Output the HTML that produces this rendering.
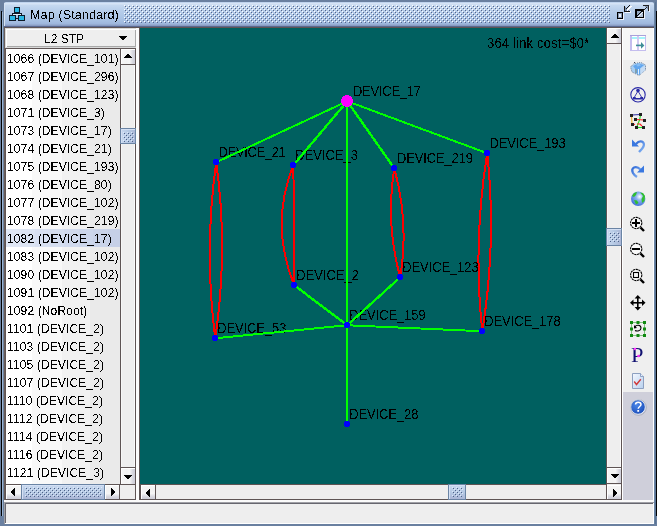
<!DOCTYPE html>
<html><head><meta charset="utf-8">
<style>
*{margin:0;padding:0;box-sizing:border-box}
html,body{width:657px;height:526px;overflow:hidden}
body{position:relative;background:#6a80a0;font-family:"Liberation Sans",sans-serif;color:#000}
.a{position:absolute}
.t{position:absolute;white-space:nowrap;font-size:12px;line-height:14px;filter:url(#crisp)}
</style></head><body>
<svg width="0" height="0" style="position:absolute"><filter id="crisp" x="-10%" y="-10%" width="120%" height="120%"><feComponentTransfer><feFuncA type="discrete" tableValues="0 1"/></feComponentTransfer></filter><filter id="crisp2" x="-10%" y="-10%" width="120%" height="120%"><feComponentTransfer><feFuncA type="discrete" tableValues="0 1 1"/></feComponentTransfer></filter></svg>
<div class="a" style="left:1px;top:11px;width:1px;height:505px;background:#000;"></div>
<div class="a" style="left:2px;top:12px;width:1px;height:504px;background:#9ab4d4;"></div>
<div class="a" style="left:3px;top:12px;width:1px;height:504px;background:#6a7f9a;"></div>
<div class="a" style="left:656px;top:11px;width:1px;height:505px;background:#000;"></div>
<div class="a" style="left:654px;top:2px;width:1px;height:522px;background:#6a84a4;"></div>
<div class="a" style="left:655px;top:2px;width:1px;height:522px;background:#5a7494;"></div>
<div class="a" style="left:4px;top:2px;width:650px;height:25px;border-radius:2px 2px 0 0;background:linear-gradient(#c0d4ee 0px,#c0d4ee 1px,#d6e4f6 1px,#d6e4f6 2px,#c6d9f0 3px,#b9cfeb 8px,#aec7e7 14px,#a6bfe2 19px,#9eb6dc 22px,#8ea2c8 23px,#8496be 24px,#5a6890 24px,#5a6890 25px)"></div>
<div class="a" style="left:4px;top:3px;width:1px;height:23px;background:#d6e2f2"></div>
<svg class="a" style="left:0;top:0" width="657" height="27" shape-rendering="crispEdges">
<defs><pattern id="bp" x="124" y="5" width="4" height="4" patternUnits="userSpaceOnUse">
<rect x="0" y="0" width="1" height="1" fill="#ffffff"/><rect x="1" y="1" width="1" height="1" fill="#56668a"/>
<rect x="2" y="2" width="1" height="1" fill="#ffffff"/><rect x="3" y="3" width="1" height="1" fill="#56668a"/>
</pattern></defs>
<rect x="124" y="5" width="486" height="18" fill="url(#bp)"/>
<g fill="#0e1a28">
<rect x="14" y="7" width="6" height="6"/><rect x="9" y="15" width="7" height="6"/><rect x="18" y="15" width="7" height="6"/>
<rect x="12" y="13" width="10" height="1"/><rect x="12" y="13" width="1" height="2"/><rect x="21" y="13" width="1" height="2"/><rect x="16" y="18" width="2" height="1"/>
</g><g fill="#2ab8e4"><rect x="15" y="8" width="4" height="4"/><rect x="10" y="16" width="5" height="4"/><rect x="19" y="16" width="5" height="4"/></g>
<rect x="13" y="14" width="8" height="1" fill="#e8eef8"/>
<rect x="617" y="12" width="6" height="7" fill="#000"/>
<rect x="618" y="13" width="4" height="5" fill="#8597b2"/>
<rect x="619" y="14" width="2" height="3" fill="#e8eef8"/>
<rect x="623" y="13" width="1" height="7" fill="#f0f4fc"/><rect x="618" y="19" width="6" height="1" fill="#f0f4fc"/>
<path d="M625 7 L629 11 L625 11 Z" fill="#7f92ae"/>
<rect x="624" y="6" width="1" height="6" fill="#111"/><rect x="624" y="11" width="6" height="1" fill="#111"/>
<rect x="625" y="12" width="6" height="1" fill="#f0f4fc"/><rect x="630" y="11" width="1" height="1" fill="#f0f4fc"/>
<path d="M625.5 9.5 L630 5" stroke="#111" stroke-width="1"/>
<path d="M627 10.5 L631.5 6" stroke="#ffffff" stroke-width="1"/>
<rect x="635" y="9" width="9" height="9" fill="#000"/>
<rect x="637" y="11" width="6" height="6" fill="#92a6c0"/>
<rect x="640" y="14" width="3" height="3" fill="#b6c6da"/>
<path d="M636.8 16.2 L642.5 10.5" stroke="#000" stroke-width="1"/>
<path d="M638.2 16.8 L642.8 12.2" stroke="#f4f8ff" stroke-width="1"/>
<rect x="644" y="10" width="1" height="9" fill="#f0f4fc"/><rect x="636" y="18" width="9" height="1" fill="#f0f4fc"/>
<path d="M644 6 L648 6 L648 10 Z" fill="#8194b0"/>
<rect x="643" y="5" width="6" height="1" fill="#222"/><rect x="648" y="5" width="1" height="6" fill="#222"/>
<rect x="649" y="6" width="1" height="6" fill="#f0f4fc"/>
<path d="M642 12 L647 7" stroke="#222" stroke-width="1"/>
</svg>
<div class="t" style="left:30px;top:7px;font-size:12.6px;line-height:16px;letter-spacing:0.1px">Map (Standard)</div>
<div class="a" style="left:4px;top:27px;width:650px;height:1px;background:#5e5454;"></div>
<div class="a" style="left:4px;top:28px;width:650px;height:472px;background:#eeeeee;"></div>
<div class="a" style="left:4px;top:27px;width:1px;height:473px;background:#6a5e5a;"></div>
<div class="a" style="left:5px;top:28px;width:131px;height:20px;background:#d8d8d8;"></div>
<div class="a" style="left:6px;top:29px;width:130px;height:18px;background:#ffffff;"></div>
<div class="a" style="left:7px;top:30px;width:128px;height:16px;background:#eeeeee;"></div>
<div class="a" style="left:7px;top:46px;width:129px;height:1px;background:#a8a8a8;"></div>
<div class="a" style="left:135px;top:30px;width:1px;height:17px;background:#a8a8a8;"></div>
<div class="t" style="left:44px;top:32px">L2 STP</div>
<div class="a" style="left:5px;top:48px;width:131px;height:1px;background:#5e5454;"></div>
<div class="a" style="left:5px;top:48px;width:1px;height:452px;background:#5e5454;"></div>
<div class="a" style="left:6px;top:49px;width:114px;height:435px;background:linear-gradient(90deg,#fff 0,#fff 26px,#f8f8f8 26px,#f8f8f8 56px,#f1f1f1 56px,#f1f1f1 84px,#eaeaea 84px)"></div>
<div class="a" style="left:6px;top:229px;width:114px;height:18px;background:linear-gradient(90deg,#e0e7f5 0.0px,#e0e7f5 14.5px,#dce4f3 14.5px,#dce4f3 29.0px,#d8e0f1 29.0px,#d8e0f1 43.5px,#d4ddef 43.5px,#d4ddef 58.0px,#d0d9ed 58.0px,#d0d9ed 72.5px,#ccd6eb 72.5px,#ccd6eb 87.0px,#c9d3e9 87.0px,#c9d3e9 101.5px,#c6d0e7 101.5px,#c6d0e7 116.0px)"></div>
<div class="t" style="left:7px;top:52px;letter-spacing:0.13px">1066 (DEVICE_101)</div>
<div class="t" style="left:7px;top:70px;letter-spacing:0.13px">1067 (DEVICE_296)</div>
<div class="t" style="left:7px;top:88px;letter-spacing:0.13px">1068 (DEVICE_123)</div>
<div class="t" style="left:7px;top:106px;letter-spacing:0.13px">1071 (DEVICE_3)</div>
<div class="t" style="left:7px;top:124px;letter-spacing:0.13px">1073 (DEVICE_17)</div>
<div class="t" style="left:7px;top:142px;letter-spacing:0.13px">1074 (DEVICE_21)</div>
<div class="t" style="left:7px;top:160px;letter-spacing:0.13px">1075 (DEVICE_193)</div>
<div class="t" style="left:7px;top:178px;letter-spacing:0.13px">1076 (DEVICE_80)</div>
<div class="t" style="left:7px;top:196px;letter-spacing:0.13px">1077 (DEVICE_102)</div>
<div class="t" style="left:7px;top:214px;letter-spacing:0.13px">1078 (DEVICE_219)</div>
<div class="t" style="left:7px;top:232px;letter-spacing:0.13px">1082 (DEVICE_17)</div>
<div class="t" style="left:7px;top:250px;letter-spacing:0.13px">1083 (DEVICE_102)</div>
<div class="t" style="left:7px;top:268px;letter-spacing:0.13px">1090 (DEVICE_102)</div>
<div class="t" style="left:7px;top:286px;letter-spacing:0.13px">1091 (DEVICE_102)</div>
<div class="t" style="left:7px;top:304px;letter-spacing:0.13px">1092 (NoRoot)</div>
<div class="t" style="left:7px;top:322px;letter-spacing:0.13px">1101 (DEVICE_2)</div>
<div class="t" style="left:7px;top:340px;letter-spacing:0.13px">1103 (DEVICE_2)</div>
<div class="t" style="left:7px;top:358px;letter-spacing:0.13px">1105 (DEVICE_2)</div>
<div class="t" style="left:7px;top:376px;letter-spacing:0.13px">1107 (DEVICE_2)</div>
<div class="t" style="left:7px;top:394px;letter-spacing:0.13px">1110 (DEVICE_2)</div>
<div class="t" style="left:7px;top:412px;letter-spacing:0.13px">1112 (DEVICE_2)</div>
<div class="t" style="left:7px;top:430px;letter-spacing:0.13px">1114 (DEVICE_2)</div>
<div class="t" style="left:7px;top:448px;letter-spacing:0.13px">1116 (DEVICE_2)</div>
<div class="t" style="left:7px;top:466px;letter-spacing:0.13px">1121 (DEVICE_3)</div>
<div class="a" style="left:120px;top:49px;width:1px;height:435px;background:#5e5454;"></div>
<div class="a" style="left:135px;top:48px;width:1px;height:452px;background:#5e5454;"></div>
<div class="a" style="left:121px;top:49px;width:14px;height:435px;background:#eeeeee;"></div>
<div class="a" style="left:121px;top:49px;width:1px;height:435px;background:#f6f6f6;"></div>
<div class="a" style="left:134px;top:49px;width:1px;height:435px;background:#fafafa;"></div>
<div class="a" style="left:121px;top:49px;width:14px;height:15px;background:linear-gradient(90deg,#f6f6f6 0,#f2f2f2 40%,#f6f6f6 60%,#d6d6de 85%,#cfcfd9 100%);"></div>
<div class="a" style="left:121px;top:49px;width:14px;height:1px;background:#ffffff;"></div>
<div class="a" style="left:121px;top:49px;width:1px;height:15px;background:#ffffff;"></div>
<div class="a" style="left:121px;top:64px;width:14px;height:1px;background:#5e5454;"></div>
<div class="a" style="left:121px;top:467px;width:14px;height:1px;background:#5e5454;"></div>
<div class="a" style="left:121px;top:468px;width:14px;height:16px;background:linear-gradient(90deg,#f6f6f6 0,#f2f2f2 40%,#f6f6f6 60%,#d6d6de 85%,#cfcfd9 100%);"></div>
<div class="a" style="left:121px;top:468px;width:1px;height:16px;background:#ffffff;"></div>
<div class="a" style="left:121px;top:468px;width:14px;height:1px;background:#ffffff;"></div>
<div class="a" style="left:120px;top:128px;width:16px;height:16px;border:1px solid #6a84a4;box-shadow:inset 1px 1px 0 #d4e0f4;background:linear-gradient(90deg,#c8d8ef,#b4c8e3 55%,#abb6d6)"></div>
<svg class="a" style="left:0;top:0" width="657" height="526" shape-rendering="crispEdges"><rect x="123" y="132" width="1" height="1" fill="#dce8f8"/><rect x="127" y="132" width="1" height="1" fill="#dce8f8"/><rect x="131" y="132" width="1" height="1" fill="#dce8f8"/><rect x="124" y="133" width="1" height="1" fill="#4e6288"/><rect x="128" y="133" width="1" height="1" fill="#4e6288"/><rect x="132" y="133" width="1" height="1" fill="#4e6288"/><rect x="125" y="134" width="1" height="1" fill="#dce8f8"/><rect x="129" y="134" width="1" height="1" fill="#dce8f8"/><rect x="133" y="134" width="1" height="1" fill="#dce8f8"/><rect x="126" y="135" width="1" height="1" fill="#4e6288"/><rect x="130" y="135" width="1" height="1" fill="#4e6288"/><rect x="123" y="136" width="1" height="1" fill="#dce8f8"/><rect x="127" y="136" width="1" height="1" fill="#dce8f8"/><rect x="131" y="136" width="1" height="1" fill="#dce8f8"/><rect x="124" y="137" width="1" height="1" fill="#4e6288"/><rect x="128" y="137" width="1" height="1" fill="#4e6288"/><rect x="132" y="137" width="1" height="1" fill="#4e6288"/><rect x="125" y="138" width="1" height="1" fill="#dce8f8"/><rect x="129" y="138" width="1" height="1" fill="#dce8f8"/><rect x="133" y="138" width="1" height="1" fill="#dce8f8"/><rect x="126" y="139" width="1" height="1" fill="#4e6288"/><rect x="130" y="139" width="1" height="1" fill="#4e6288"/><rect x="123" y="140" width="1" height="1" fill="#dce8f8"/><rect x="127" y="140" width="1" height="1" fill="#dce8f8"/><rect x="131" y="140" width="1" height="1" fill="#dce8f8"/><rect x="124" y="141" width="1" height="1" fill="#4e6288"/><rect x="128" y="141" width="1" height="1" fill="#4e6288"/><rect x="132" y="141" width="1" height="1" fill="#4e6288"/></svg>
<div class="a" style="left:5px;top:484px;width:131px;height:1px;background:#5e5454;"></div>
<div class="a" style="left:5px;top:499px;width:131px;height:1px;background:#5e5454;"></div>
<div class="a" style="left:6px;top:485px;width:15px;height:14px;background:linear-gradient(180deg,#f6f6f6 0,#f2f2f2 40%,#f6f6f6 60%,#d6d6de 85%,#cfcfd9 100%);"></div>
<div class="a" style="left:6px;top:485px;width:15px;height:1px;background:#ffffff;"></div>
<div class="a" style="left:6px;top:485px;width:1px;height:14px;background:#ffffff;"></div>
<div class="a" style="left:21px;top:484px;width:84px;height:16px;border:1px solid #6a84a4;box-shadow:inset 1px 1px 0 #d4e0f4;background:linear-gradient(180deg,#c8d8ef,#b4c8e3 55%,#abb6d6)"></div>
<svg class="a" style="left:0;top:0" width="657" height="526" shape-rendering="crispEdges"><rect x="25" y="487" width="1" height="1" fill="#dce8f8"/><rect x="29" y="487" width="1" height="1" fill="#dce8f8"/><rect x="33" y="487" width="1" height="1" fill="#dce8f8"/><rect x="37" y="487" width="1" height="1" fill="#dce8f8"/><rect x="41" y="487" width="1" height="1" fill="#dce8f8"/><rect x="45" y="487" width="1" height="1" fill="#dce8f8"/><rect x="49" y="487" width="1" height="1" fill="#dce8f8"/><rect x="53" y="487" width="1" height="1" fill="#dce8f8"/><rect x="57" y="487" width="1" height="1" fill="#dce8f8"/><rect x="61" y="487" width="1" height="1" fill="#dce8f8"/><rect x="65" y="487" width="1" height="1" fill="#dce8f8"/><rect x="69" y="487" width="1" height="1" fill="#dce8f8"/><rect x="73" y="487" width="1" height="1" fill="#dce8f8"/><rect x="77" y="487" width="1" height="1" fill="#dce8f8"/><rect x="81" y="487" width="1" height="1" fill="#dce8f8"/><rect x="85" y="487" width="1" height="1" fill="#dce8f8"/><rect x="89" y="487" width="1" height="1" fill="#dce8f8"/><rect x="93" y="487" width="1" height="1" fill="#dce8f8"/><rect x="97" y="487" width="1" height="1" fill="#dce8f8"/><rect x="101" y="487" width="1" height="1" fill="#dce8f8"/><rect x="26" y="488" width="1" height="1" fill="#4e6288"/><rect x="30" y="488" width="1" height="1" fill="#4e6288"/><rect x="34" y="488" width="1" height="1" fill="#4e6288"/><rect x="38" y="488" width="1" height="1" fill="#4e6288"/><rect x="42" y="488" width="1" height="1" fill="#4e6288"/><rect x="46" y="488" width="1" height="1" fill="#4e6288"/><rect x="50" y="488" width="1" height="1" fill="#4e6288"/><rect x="54" y="488" width="1" height="1" fill="#4e6288"/><rect x="58" y="488" width="1" height="1" fill="#4e6288"/><rect x="62" y="488" width="1" height="1" fill="#4e6288"/><rect x="66" y="488" width="1" height="1" fill="#4e6288"/><rect x="70" y="488" width="1" height="1" fill="#4e6288"/><rect x="74" y="488" width="1" height="1" fill="#4e6288"/><rect x="78" y="488" width="1" height="1" fill="#4e6288"/><rect x="82" y="488" width="1" height="1" fill="#4e6288"/><rect x="86" y="488" width="1" height="1" fill="#4e6288"/><rect x="90" y="488" width="1" height="1" fill="#4e6288"/><rect x="94" y="488" width="1" height="1" fill="#4e6288"/><rect x="98" y="488" width="1" height="1" fill="#4e6288"/><rect x="27" y="489" width="1" height="1" fill="#dce8f8"/><rect x="31" y="489" width="1" height="1" fill="#dce8f8"/><rect x="35" y="489" width="1" height="1" fill="#dce8f8"/><rect x="39" y="489" width="1" height="1" fill="#dce8f8"/><rect x="43" y="489" width="1" height="1" fill="#dce8f8"/><rect x="47" y="489" width="1" height="1" fill="#dce8f8"/><rect x="51" y="489" width="1" height="1" fill="#dce8f8"/><rect x="55" y="489" width="1" height="1" fill="#dce8f8"/><rect x="59" y="489" width="1" height="1" fill="#dce8f8"/><rect x="63" y="489" width="1" height="1" fill="#dce8f8"/><rect x="67" y="489" width="1" height="1" fill="#dce8f8"/><rect x="71" y="489" width="1" height="1" fill="#dce8f8"/><rect x="75" y="489" width="1" height="1" fill="#dce8f8"/><rect x="79" y="489" width="1" height="1" fill="#dce8f8"/><rect x="83" y="489" width="1" height="1" fill="#dce8f8"/><rect x="87" y="489" width="1" height="1" fill="#dce8f8"/><rect x="91" y="489" width="1" height="1" fill="#dce8f8"/><rect x="95" y="489" width="1" height="1" fill="#dce8f8"/><rect x="99" y="489" width="1" height="1" fill="#dce8f8"/><rect x="28" y="490" width="1" height="1" fill="#4e6288"/><rect x="32" y="490" width="1" height="1" fill="#4e6288"/><rect x="36" y="490" width="1" height="1" fill="#4e6288"/><rect x="40" y="490" width="1" height="1" fill="#4e6288"/><rect x="44" y="490" width="1" height="1" fill="#4e6288"/><rect x="48" y="490" width="1" height="1" fill="#4e6288"/><rect x="52" y="490" width="1" height="1" fill="#4e6288"/><rect x="56" y="490" width="1" height="1" fill="#4e6288"/><rect x="60" y="490" width="1" height="1" fill="#4e6288"/><rect x="64" y="490" width="1" height="1" fill="#4e6288"/><rect x="68" y="490" width="1" height="1" fill="#4e6288"/><rect x="72" y="490" width="1" height="1" fill="#4e6288"/><rect x="76" y="490" width="1" height="1" fill="#4e6288"/><rect x="80" y="490" width="1" height="1" fill="#4e6288"/><rect x="84" y="490" width="1" height="1" fill="#4e6288"/><rect x="88" y="490" width="1" height="1" fill="#4e6288"/><rect x="92" y="490" width="1" height="1" fill="#4e6288"/><rect x="96" y="490" width="1" height="1" fill="#4e6288"/><rect x="100" y="490" width="1" height="1" fill="#4e6288"/><rect x="25" y="491" width="1" height="1" fill="#dce8f8"/><rect x="29" y="491" width="1" height="1" fill="#dce8f8"/><rect x="33" y="491" width="1" height="1" fill="#dce8f8"/><rect x="37" y="491" width="1" height="1" fill="#dce8f8"/><rect x="41" y="491" width="1" height="1" fill="#dce8f8"/><rect x="45" y="491" width="1" height="1" fill="#dce8f8"/><rect x="49" y="491" width="1" height="1" fill="#dce8f8"/><rect x="53" y="491" width="1" height="1" fill="#dce8f8"/><rect x="57" y="491" width="1" height="1" fill="#dce8f8"/><rect x="61" y="491" width="1" height="1" fill="#dce8f8"/><rect x="65" y="491" width="1" height="1" fill="#dce8f8"/><rect x="69" y="491" width="1" height="1" fill="#dce8f8"/><rect x="73" y="491" width="1" height="1" fill="#dce8f8"/><rect x="77" y="491" width="1" height="1" fill="#dce8f8"/><rect x="81" y="491" width="1" height="1" fill="#dce8f8"/><rect x="85" y="491" width="1" height="1" fill="#dce8f8"/><rect x="89" y="491" width="1" height="1" fill="#dce8f8"/><rect x="93" y="491" width="1" height="1" fill="#dce8f8"/><rect x="97" y="491" width="1" height="1" fill="#dce8f8"/><rect x="101" y="491" width="1" height="1" fill="#dce8f8"/><rect x="26" y="492" width="1" height="1" fill="#4e6288"/><rect x="30" y="492" width="1" height="1" fill="#4e6288"/><rect x="34" y="492" width="1" height="1" fill="#4e6288"/><rect x="38" y="492" width="1" height="1" fill="#4e6288"/><rect x="42" y="492" width="1" height="1" fill="#4e6288"/><rect x="46" y="492" width="1" height="1" fill="#4e6288"/><rect x="50" y="492" width="1" height="1" fill="#4e6288"/><rect x="54" y="492" width="1" height="1" fill="#4e6288"/><rect x="58" y="492" width="1" height="1" fill="#4e6288"/><rect x="62" y="492" width="1" height="1" fill="#4e6288"/><rect x="66" y="492" width="1" height="1" fill="#4e6288"/><rect x="70" y="492" width="1" height="1" fill="#4e6288"/><rect x="74" y="492" width="1" height="1" fill="#4e6288"/><rect x="78" y="492" width="1" height="1" fill="#4e6288"/><rect x="82" y="492" width="1" height="1" fill="#4e6288"/><rect x="86" y="492" width="1" height="1" fill="#4e6288"/><rect x="90" y="492" width="1" height="1" fill="#4e6288"/><rect x="94" y="492" width="1" height="1" fill="#4e6288"/><rect x="98" y="492" width="1" height="1" fill="#4e6288"/><rect x="27" y="493" width="1" height="1" fill="#dce8f8"/><rect x="31" y="493" width="1" height="1" fill="#dce8f8"/><rect x="35" y="493" width="1" height="1" fill="#dce8f8"/><rect x="39" y="493" width="1" height="1" fill="#dce8f8"/><rect x="43" y="493" width="1" height="1" fill="#dce8f8"/><rect x="47" y="493" width="1" height="1" fill="#dce8f8"/><rect x="51" y="493" width="1" height="1" fill="#dce8f8"/><rect x="55" y="493" width="1" height="1" fill="#dce8f8"/><rect x="59" y="493" width="1" height="1" fill="#dce8f8"/><rect x="63" y="493" width="1" height="1" fill="#dce8f8"/><rect x="67" y="493" width="1" height="1" fill="#dce8f8"/><rect x="71" y="493" width="1" height="1" fill="#dce8f8"/><rect x="75" y="493" width="1" height="1" fill="#dce8f8"/><rect x="79" y="493" width="1" height="1" fill="#dce8f8"/><rect x="83" y="493" width="1" height="1" fill="#dce8f8"/><rect x="87" y="493" width="1" height="1" fill="#dce8f8"/><rect x="91" y="493" width="1" height="1" fill="#dce8f8"/><rect x="95" y="493" width="1" height="1" fill="#dce8f8"/><rect x="99" y="493" width="1" height="1" fill="#dce8f8"/><rect x="28" y="494" width="1" height="1" fill="#4e6288"/><rect x="32" y="494" width="1" height="1" fill="#4e6288"/><rect x="36" y="494" width="1" height="1" fill="#4e6288"/><rect x="40" y="494" width="1" height="1" fill="#4e6288"/><rect x="44" y="494" width="1" height="1" fill="#4e6288"/><rect x="48" y="494" width="1" height="1" fill="#4e6288"/><rect x="52" y="494" width="1" height="1" fill="#4e6288"/><rect x="56" y="494" width="1" height="1" fill="#4e6288"/><rect x="60" y="494" width="1" height="1" fill="#4e6288"/><rect x="64" y="494" width="1" height="1" fill="#4e6288"/><rect x="68" y="494" width="1" height="1" fill="#4e6288"/><rect x="72" y="494" width="1" height="1" fill="#4e6288"/><rect x="76" y="494" width="1" height="1" fill="#4e6288"/><rect x="80" y="494" width="1" height="1" fill="#4e6288"/><rect x="84" y="494" width="1" height="1" fill="#4e6288"/><rect x="88" y="494" width="1" height="1" fill="#4e6288"/><rect x="92" y="494" width="1" height="1" fill="#4e6288"/><rect x="96" y="494" width="1" height="1" fill="#4e6288"/><rect x="100" y="494" width="1" height="1" fill="#4e6288"/><rect x="25" y="495" width="1" height="1" fill="#dce8f8"/><rect x="29" y="495" width="1" height="1" fill="#dce8f8"/><rect x="33" y="495" width="1" height="1" fill="#dce8f8"/><rect x="37" y="495" width="1" height="1" fill="#dce8f8"/><rect x="41" y="495" width="1" height="1" fill="#dce8f8"/><rect x="45" y="495" width="1" height="1" fill="#dce8f8"/><rect x="49" y="495" width="1" height="1" fill="#dce8f8"/><rect x="53" y="495" width="1" height="1" fill="#dce8f8"/><rect x="57" y="495" width="1" height="1" fill="#dce8f8"/><rect x="61" y="495" width="1" height="1" fill="#dce8f8"/><rect x="65" y="495" width="1" height="1" fill="#dce8f8"/><rect x="69" y="495" width="1" height="1" fill="#dce8f8"/><rect x="73" y="495" width="1" height="1" fill="#dce8f8"/><rect x="77" y="495" width="1" height="1" fill="#dce8f8"/><rect x="81" y="495" width="1" height="1" fill="#dce8f8"/><rect x="85" y="495" width="1" height="1" fill="#dce8f8"/><rect x="89" y="495" width="1" height="1" fill="#dce8f8"/><rect x="93" y="495" width="1" height="1" fill="#dce8f8"/><rect x="97" y="495" width="1" height="1" fill="#dce8f8"/><rect x="101" y="495" width="1" height="1" fill="#dce8f8"/><rect x="26" y="496" width="1" height="1" fill="#4e6288"/><rect x="30" y="496" width="1" height="1" fill="#4e6288"/><rect x="34" y="496" width="1" height="1" fill="#4e6288"/><rect x="38" y="496" width="1" height="1" fill="#4e6288"/><rect x="42" y="496" width="1" height="1" fill="#4e6288"/><rect x="46" y="496" width="1" height="1" fill="#4e6288"/><rect x="50" y="496" width="1" height="1" fill="#4e6288"/><rect x="54" y="496" width="1" height="1" fill="#4e6288"/><rect x="58" y="496" width="1" height="1" fill="#4e6288"/><rect x="62" y="496" width="1" height="1" fill="#4e6288"/><rect x="66" y="496" width="1" height="1" fill="#4e6288"/><rect x="70" y="496" width="1" height="1" fill="#4e6288"/><rect x="74" y="496" width="1" height="1" fill="#4e6288"/><rect x="78" y="496" width="1" height="1" fill="#4e6288"/><rect x="82" y="496" width="1" height="1" fill="#4e6288"/><rect x="86" y="496" width="1" height="1" fill="#4e6288"/><rect x="90" y="496" width="1" height="1" fill="#4e6288"/><rect x="94" y="496" width="1" height="1" fill="#4e6288"/><rect x="98" y="496" width="1" height="1" fill="#4e6288"/></svg>
<div class="a" style="left:105px;top:485px;width:14px;height:14px;background:linear-gradient(180deg,#f6f6f6 0,#f2f2f2 40%,#f6f6f6 60%,#d6d6de 85%,#cfcfd9 100%);"></div>
<div class="a" style="left:105px;top:485px;width:14px;height:1px;background:#ffffff;"></div>
<div class="a" style="left:105px;top:485px;width:1px;height:14px;background:#ffffff;"></div>
<div class="a" style="left:119px;top:485px;width:1px;height:14px;background:#5e5454;"></div>
<div class="a" style="left:120px;top:485px;width:15px;height:14px;background:#eeeeee;"></div>
<div class="a" style="left:136px;top:28px;width:3px;height:472px;background:#fbfbfb;"></div>
<div class="a" style="left:139px;top:27px;width:1px;height:473px;background:#5e5454;"></div>
<svg class="a" style="left:140px;top:28px" width="466" height="456" viewBox="140 28 466 456">
<rect x="140" y="28" width="466" height="456" fill="#006060"/>
<g filter="url(#crisp)" font-family="Liberation Sans" font-size="14.4" fill="#000">
<text transform="translate(487.0 48) scale(0.9 1)" textLength="113.67" lengthAdjust="spacing">364 link cost=$0*</text>
<text transform="translate(353.0 96) scale(0.9 1)" textLength="75.56" lengthAdjust="spacing">DEVICE_17</text>
<text transform="translate(218.6 157) scale(0.9 1)" textLength="74.67" lengthAdjust="spacing">DEVICE_21</text>
<text transform="translate(295.2 160) scale(0.9 1)" textLength="69.78" lengthAdjust="spacing">DEVICE_3</text>
<text transform="translate(397.0 163) scale(0.9 1)" textLength="84.44" lengthAdjust="spacing">DEVICE_219</text>
<text transform="translate(489.6 148) scale(0.9 1)" textLength="84.44" lengthAdjust="spacing">DEVICE_193</text>
<text transform="translate(296.2 280) scale(0.9 1)" textLength="69.78" lengthAdjust="spacing">DEVICE_2</text>
<text transform="translate(402.2 272) scale(0.9 1)" textLength="84.89" lengthAdjust="spacing">DEVICE_123</text>
<text transform="translate(349.2 320) scale(0.9 1)" textLength="84.89" lengthAdjust="spacing">DEVICE_159</text>
<text transform="translate(217.2 333) scale(0.9 1)" textLength="76.89" lengthAdjust="spacing">DEVICE_53</text>
<text transform="translate(484.2 326) scale(0.9 1)" textLength="84.89" lengthAdjust="spacing">DEVICE_178</text>
<text transform="translate(349.2 419) scale(0.9 1)" textLength="76.89" lengthAdjust="spacing">DEVICE_28</text>
</g>
<g shape-rendering="crispEdges" stroke-width="2.4" fill="none" transform="translate(0.25 0.25)">
<line x1="347" y1="101" x2="216" y2="162" stroke="#00ff00" stroke-width="2"/>
<line x1="347" y1="101" x2="293" y2="165" stroke="#00ff00" stroke-width="2.4"/>
<line x1="347" y1="101" x2="347" y2="325" stroke="#00ff00" stroke-width="2"/>
<line x1="347" y1="101" x2="394" y2="168" stroke="#00ff00" stroke-width="2.4"/>
<line x1="347" y1="101" x2="487" y2="153" stroke="#00ff00" stroke-width="2"/>
<line x1="294" y1="285" x2="347" y2="325" stroke="#00ff00" stroke-width="2.4"/>
<line x1="400" y1="277" x2="347" y2="325" stroke="#00ff00" stroke-width="2.4"/>
<line x1="215" y1="338" x2="347" y2="325" stroke="#00ff00" stroke-width="2"/>
<line x1="347" y1="325" x2="482" y2="331" stroke="#00ff00" stroke-width="2"/>
<line x1="347" y1="325" x2="347" y2="424" stroke="#00ff00" stroke-width="2"/>
<path d="M216 162 Q203.50 249.93 215 338" stroke="#ff0000" stroke-width="2"/>
<path d="M216 162 Q228.10 250.07 215 338" stroke="#ff0000" stroke-width="2"/>
<path d="M293 165 Q269.50 225.20 294 285" stroke="#ff0000" stroke-width="2"/>
<path d="M293 165 Q294.50 224.99 294 285" stroke="#ff0000" stroke-width="2"/>
<path d="M394 168 Q385.02 223.16 400 277" stroke="#ff0000" stroke-width="2"/>
<path d="M394 168 Q408.98 221.84 400 277" stroke="#ff0000" stroke-width="2"/>
<path d="M487 153 Q472.50 241.66 482 331" stroke="#ff0000" stroke-width="2"/>
<path d="M487 153 Q496.50 242.34 482 331" stroke="#ff0000" stroke-width="2"/>
</g>
<g shape-rendering="crispEdges">
<circle cx="347" cy="101" r="6" fill="#ff00ff"/>
<circle cx="216" cy="162" r="3" fill="#0000ff"/>
<circle cx="293" cy="165" r="3" fill="#0000ff"/>
<circle cx="394" cy="168" r="3" fill="#0000ff"/>
<circle cx="487" cy="153" r="3" fill="#0000ff"/>
<circle cx="294" cy="285" r="3" fill="#0000ff"/>
<circle cx="400" cy="277" r="3" fill="#0000ff"/>
<circle cx="347" cy="325" r="3" fill="#0000ff"/>
<circle cx="215" cy="338" r="3" fill="#0000ff"/>
<circle cx="482" cy="331" r="3" fill="#0000ff"/>
<circle cx="347" cy="424" r="3" fill="#0000ff"/>
</g></svg>
<div class="a" style="left:140px;top:484px;width:467px;height:1px;background:#5e5454;"></div>
<div class="a" style="left:140px;top:499px;width:482px;height:1px;background:#5e5454;"></div>
<div class="a" style="left:606px;top:28px;width:1px;height:472px;background:#5e5454;"></div>
<div class="a" style="left:621px;top:28px;width:1px;height:472px;background:#5e5454;"></div>
<div class="a" style="left:607px;top:28px;width:14px;height:456px;background:#eeeeee;"></div>
<div class="a" style="left:607px;top:28px;width:1px;height:456px;background:#f6f6f6;"></div>
<div class="a" style="left:620px;top:28px;width:1px;height:456px;background:#fafafa;"></div>
<div class="a" style="left:607px;top:28px;width:14px;height:15px;background:linear-gradient(90deg,#f6f6f6 0,#f2f2f2 40%,#f6f6f6 60%,#d6d6de 85%,#cfcfd9 100%);"></div>
<div class="a" style="left:607px;top:28px;width:14px;height:1px;background:#ffffff;"></div>
<div class="a" style="left:607px;top:28px;width:1px;height:15px;background:#ffffff;"></div>
<div class="a" style="left:607px;top:43px;width:14px;height:1px;background:#5e5454;"></div>
<div class="a" style="left:607px;top:467px;width:14px;height:1px;background:#5e5454;"></div>
<div class="a" style="left:607px;top:468px;width:14px;height:15px;background:linear-gradient(90deg,#f6f6f6 0,#f2f2f2 40%,#f6f6f6 60%,#d6d6de 85%,#cfcfd9 100%);"></div>
<div class="a" style="left:607px;top:468px;width:1px;height:15px;background:#ffffff;"></div>
<div class="a" style="left:607px;top:468px;width:14px;height:1px;background:#ffffff;"></div>
<div class="a" style="left:607px;top:483px;width:14px;height:1px;background:#5e5454;"></div>
<div class="a" style="left:606px;top:228px;width:16px;height:18px;border:1px solid #6a84a4;box-shadow:inset 1px 1px 0 #d4e0f4;background:linear-gradient(90deg,#c8d8ef,#b4c8e3 55%,#abb6d6)"></div>
<svg class="a" style="left:0;top:0" width="657" height="526" shape-rendering="crispEdges"><rect x="609" y="232" width="1" height="1" fill="#dce8f8"/><rect x="613" y="232" width="1" height="1" fill="#dce8f8"/><rect x="617" y="232" width="1" height="1" fill="#dce8f8"/><rect x="610" y="233" width="1" height="1" fill="#4e6288"/><rect x="614" y="233" width="1" height="1" fill="#4e6288"/><rect x="618" y="233" width="1" height="1" fill="#4e6288"/><rect x="611" y="234" width="1" height="1" fill="#dce8f8"/><rect x="615" y="234" width="1" height="1" fill="#dce8f8"/><rect x="619" y="234" width="1" height="1" fill="#dce8f8"/><rect x="612" y="235" width="1" height="1" fill="#4e6288"/><rect x="616" y="235" width="1" height="1" fill="#4e6288"/><rect x="609" y="236" width="1" height="1" fill="#dce8f8"/><rect x="613" y="236" width="1" height="1" fill="#dce8f8"/><rect x="617" y="236" width="1" height="1" fill="#dce8f8"/><rect x="610" y="237" width="1" height="1" fill="#4e6288"/><rect x="614" y="237" width="1" height="1" fill="#4e6288"/><rect x="618" y="237" width="1" height="1" fill="#4e6288"/><rect x="611" y="238" width="1" height="1" fill="#dce8f8"/><rect x="615" y="238" width="1" height="1" fill="#dce8f8"/><rect x="619" y="238" width="1" height="1" fill="#dce8f8"/><rect x="612" y="239" width="1" height="1" fill="#4e6288"/><rect x="616" y="239" width="1" height="1" fill="#4e6288"/><rect x="609" y="240" width="1" height="1" fill="#dce8f8"/><rect x="613" y="240" width="1" height="1" fill="#dce8f8"/><rect x="617" y="240" width="1" height="1" fill="#dce8f8"/><rect x="610" y="241" width="1" height="1" fill="#4e6288"/><rect x="614" y="241" width="1" height="1" fill="#4e6288"/><rect x="618" y="241" width="1" height="1" fill="#4e6288"/></svg>
<div class="a" style="left:140px;top:485px;width:466px;height:14px;background:#eeeeee;"></div>
<div class="a" style="left:140px;top:485px;width:1px;height:14px;background:#5e5454;"></div>
<div class="a" style="left:141px;top:485px;width:14px;height:14px;background:linear-gradient(180deg,#f6f6f6 0,#f2f2f2 40%,#f6f6f6 60%,#d6d6de 85%,#cfcfd9 100%);"></div>
<div class="a" style="left:141px;top:485px;width:14px;height:1px;background:#ffffff;"></div>
<div class="a" style="left:141px;top:485px;width:1px;height:14px;background:#ffffff;"></div>
<div class="a" style="left:155px;top:485px;width:1px;height:14px;background:#5e5454;"></div>
<div class="a" style="left:606px;top:485px;width:1px;height:14px;background:#5e5454;"></div>
<div class="a" style="left:607px;top:485px;width:14px;height:14px;background:linear-gradient(180deg,#f6f6f6 0,#f2f2f2 40%,#f6f6f6 60%,#d6d6de 85%,#cfcfd9 100%);"></div>
<div class="a" style="left:607px;top:485px;width:14px;height:1px;background:#ffffff;"></div>
<div class="a" style="left:607px;top:485px;width:1px;height:14px;background:#ffffff;"></div>
<div class="a" style="left:448px;top:484px;width:18px;height:16px;border:1px solid #6a84a4;box-shadow:inset 1px 1px 0 #d4e0f4;background:linear-gradient(180deg,#c8d8ef,#b4c8e3 55%,#abb6d6)"></div>
<svg class="a" style="left:0;top:0" width="657" height="526" shape-rendering="crispEdges"><rect x="452" y="487" width="1" height="1" fill="#dce8f8"/><rect x="456" y="487" width="1" height="1" fill="#dce8f8"/><rect x="460" y="487" width="1" height="1" fill="#dce8f8"/><rect x="453" y="488" width="1" height="1" fill="#4e6288"/><rect x="457" y="488" width="1" height="1" fill="#4e6288"/><rect x="461" y="488" width="1" height="1" fill="#4e6288"/><rect x="454" y="489" width="1" height="1" fill="#dce8f8"/><rect x="458" y="489" width="1" height="1" fill="#dce8f8"/><rect x="462" y="489" width="1" height="1" fill="#dce8f8"/><rect x="455" y="490" width="1" height="1" fill="#4e6288"/><rect x="459" y="490" width="1" height="1" fill="#4e6288"/><rect x="452" y="491" width="1" height="1" fill="#dce8f8"/><rect x="456" y="491" width="1" height="1" fill="#dce8f8"/><rect x="460" y="491" width="1" height="1" fill="#dce8f8"/><rect x="453" y="492" width="1" height="1" fill="#4e6288"/><rect x="457" y="492" width="1" height="1" fill="#4e6288"/><rect x="461" y="492" width="1" height="1" fill="#4e6288"/><rect x="454" y="493" width="1" height="1" fill="#dce8f8"/><rect x="458" y="493" width="1" height="1" fill="#dce8f8"/><rect x="462" y="493" width="1" height="1" fill="#dce8f8"/><rect x="455" y="494" width="1" height="1" fill="#4e6288"/><rect x="459" y="494" width="1" height="1" fill="#4e6288"/><rect x="452" y="495" width="1" height="1" fill="#dce8f8"/><rect x="456" y="495" width="1" height="1" fill="#dce8f8"/><rect x="460" y="495" width="1" height="1" fill="#dce8f8"/><rect x="453" y="496" width="1" height="1" fill="#4e6288"/><rect x="457" y="496" width="1" height="1" fill="#4e6288"/><rect x="461" y="496" width="1" height="1" fill="#4e6288"/></svg>
<div class="a" style="left:622px;top:28px;width:31px;height:472px;background:#efefef;"></div>
<div class="a" style="left:622px;top:28px;width:31px;height:32px;background:#f6f6f6;"></div>
<div class="a" style="left:622px;top:392px;width:31px;height:108px;background:#cfcfda;"></div>
<div class="a" style="left:653px;top:28px;width:1px;height:472px;background:#ffffff;"></div>
<div class="a" style="left:622px;top:28px;width:1px;height:472px;background:#ffffff;"></div>
<svg class="a" style="left:622px;top:28px;will-change:transform" width="31" height="400" viewBox="622 28 31 400">
<g shape-rendering="crispEdges"><rect x="630" y="35" width="16" height="16" fill="#c4bdee"/>
<rect x="630" y="35" width="16" height="1" fill="#a9a1da"/>
<rect x="632" y="36" width="13" height="14" fill="#ffffff"/>
<rect x="632" y="37" width="13" height="2" fill="#a4f4fa"/>
<rect x="637" y="36" width="2" height="14" fill="#d2caf2"/></g>
<rect x="636" y="44.6" width="5.6" height="1.6" fill="#3f8e98"/>
<path d="M641 42 L644.4 45.4 L641 48.8 Z" fill="#3f8e98"/>
<defs><linearGradient id="cb" x1="0" y1="0" x2="1" y2="1"><stop offset="0" stop-color="#b6d6f6"/><stop offset="0.5" stop-color="#78aee8"/><stop offset="1" stop-color="#d8e8fa"/></linearGradient>
<radialGradient id="gl" cx="0.6" cy="0.35" r="0.7"><stop offset="0" stop-color="#ffffff"/><stop offset="0.35" stop-color="#8fb4f0"/><stop offset="1" stop-color="#3a6ad8"/></radialGradient>
<linearGradient id="ar" x1="0" y1="0" x2="1" y2="1"><stop offset="0" stop-color="#2f6ad8"/><stop offset="1" stop-color="#8ab8f4"/></linearGradient>
<radialGradient id="hp" cx="0.4" cy="0.35" r="0.7"><stop offset="0" stop-color="#4a86e8"/><stop offset="1" stop-color="#1a4cb8"/></radialGradient>
<linearGradient id="dc" x1="0" y1="0" x2="1" y2="1"><stop offset="0" stop-color="#f4f8ff"/><stop offset="1" stop-color="#b8d0ee"/></linearGradient></defs>
<path d="M630.5 67 L634 63.5 L641 62.5 L645.5 65 L645.5 70 L639 75.5 L632 72 Z" fill="#a8cef2" stroke="#505c74" stroke-width="0.8" stroke-dasharray="0.9 1.1"/>
<path d="M633 66 L638 63.5 L644 65 L640 68.5 L640 75 L636 73 L635 68.5 Z" fill="#62a6ee"/>
<path d="M636 64.5 L639.5 63.8 L641 65.5 L637.5 66.5 Z" fill="#88bdf4"/>
<path d="M640.5 68.5 L645 65.5 L645 70 L640.5 74.5 Z" fill="#c6dcf4"/>
<rect x="635" y="69" width="2" height="4" fill="#7f9fb0"/>
<rect x="638" y="69" width="1" height="5" fill="#e4f2ff"/>
<rect x="634" y="62" width="1" height="1" fill="#404a5c"/>
<circle cx="638" cy="94.8" r="7.2" fill="none" stroke="#2a2aa6" stroke-width="1.1"/>
<circle cx="638" cy="90.6" r="1.8" fill="#2a2aa6"/>
<path d="M637.4 92 L634.2 97.5 M638.6 92 L641.8 97.5" fill="none" stroke="#2a2aa6" stroke-width="0.9"/>
<path d="M633 97 L635.5 97 L636 98 L640 98 L640.5 97 L643 97 L643 99.4 L633 99.4Z" fill="#2a2aa6"/>
<g stroke-width="1.1" fill="none">
<path d="M632 115 L640 114.5" stroke="#3030a0"/>
<path d="M631.5 116 L632 124" stroke="#f0b030"/>
<path d="M640.5 115.5 L639.5 120 L637 126.5" stroke="#20e020"/>
<path d="M636 119.5 L644 120" stroke="#ff2020"/>
<path d="M633 124 L635 124.5 M637 124 L640 124 L642 126" stroke="#ff2020"/>
<path d="M637 127.5 L643 127.5" stroke="#20e020"/>
</g><g fill="#202020">
<rect x="630" y="114" width="3" height="3"/>
<rect x="639" y="113" width="3" height="3"/>
<rect x="634" y="118" width="3" height="3"/>
<rect x="643" y="119" width="3" height="3"/>
<rect x="631" y="123" width="3" height="3"/>
<rect x="635" y="126" width="3" height="3"/>
<rect x="642" y="126" width="3" height="3"/>
</g>
<path d="M636 144 C640 139.5 645.5 141.5 643.5 146.5 C642.5 149 640.5 150.5 639 152" fill="none" stroke="url(#ar)" stroke-width="2.3"/>
<path d="M632 139.5 L632 146.5 L639 146.5 Z" fill="#3a78e0"/>
<path d="M640.5 169.5 C636 165 630.5 167.5 633 173 C634 175 635.5 176 637 177" fill="none" stroke="url(#ar)" stroke-width="2.3"/>
<path d="M644 165.5 L644 172.5 L637 172.5 Z" fill="#3a78e0"/>
<circle cx="638.2" cy="198.8" r="7.2" fill="url(#gl)"/>
<path d="M632 196 L634 193 L637 192 L636 195 L634 197 Z" fill="#2fc02f"/>
<path d="M640 192.5 L643 193 L645 196 L644.5 201 L642 203 L641.5 199 L643 196 Z" fill="#2fc02f"/>
<path d="M634 200 L637 200.5 L638.5 203 L636 204.5 Z" fill="#2fc02f"/>
<circle cx="636.2" cy="223" r="5.6" fill="#ffffff" fill-opacity="0.6" stroke="#000" stroke-width="1.1" stroke-dasharray="2.2 0.6"/><path d="M640.5 227.5 L644 231" stroke="#000" stroke-width="2.4"/><rect x="632" y="222" width="8" height="2" fill="#000"/><rect x="635" y="219" width="2" height="8" fill="#000"/>
<circle cx="636.2" cy="249" r="5.6" fill="#ffffff" fill-opacity="0.6" stroke="#000" stroke-width="1.1" stroke-dasharray="2.2 0.6"/><path d="M640.5 253.5 L644 257" stroke="#000" stroke-width="2.4"/><rect x="632" y="248" width="8" height="2" fill="#000"/>
<circle cx="636.2" cy="275" r="5.6" fill="#ffffff" fill-opacity="0.6" stroke="#000" stroke-width="1.1" stroke-dasharray="2.2 0.6"/><path d="M640.5 279.5 L644 283" stroke="#000" stroke-width="2.4"/><rect x="633.5" y="272.5" width="5" height="5" fill="none" stroke="#000" stroke-width="1.1"/>
<g fill="#000"><rect x="637" y="297" width="1.6" height="12"/><rect x="631.5" y="302" width="12" height="1.6"/>
<path d="M637.8 295 L641 298.5 L634.6 298.5Z"/><path d="M637.8 310.5 L641 307 L634.6 307Z"/>
<path d="M630 302.8 L633.5 299.6 L633.5 306Z"/><path d="M645.5 302.8 L642 299.6 L642 306Z"/></g>
<rect x="631.5" y="322.5" width="13" height="13" fill="none" stroke="#109010" stroke-width="1" stroke-dasharray="1 1"/>
<g fill="#108a10">
<rect x="630" y="321" width="3" height="3"/>
<rect x="636.5" y="321" width="3" height="3"/>
<rect x="643" y="321" width="3" height="3"/>
<rect x="630" y="327.5" width="3" height="3"/>
<rect x="643" y="327.5" width="3" height="3"/>
<rect x="630" y="334" width="3" height="3"/>
<rect x="636.5" y="334" width="3" height="3"/>
<rect x="643" y="334" width="3" height="3"/>
</g>
<path d="M635 327 C636 324.5 641 324.5 641 328 C641 331 637 331.5 635 330.5" fill="none" stroke="#000" stroke-width="1.1"/>
<path d="M634 325 L634 328.5 L637 328Z" fill="#000"/>
<text transform="translate(631 362) scale(1.12 1)" font-family="Liberation Serif" font-size="20" fill="#101070">P</text>
<circle cx="635" cy="349" r="1.3" fill="#ff30ff"/><circle cx="638.5" cy="356" r="1.3" fill="#ff30ff"/>
<path d="M632.5 373.5 L640.5 373.5 L643.5 376.5 L643.5 388.5 L632.5 388.5Z" fill="url(#dc)" stroke="#8da0c0" stroke-width="1"/>
<path d="M640.5 373.5 L640.5 376.5 L643.5 376.5" fill="#e8f0ff" stroke="#7a90b8" stroke-width="0.8"/>
<path d="M634.2 381.5 L636.5 384.5 L640.8 379.2" fill="none" stroke="#d03a3a" stroke-width="1.4"/>
<circle cx="638" cy="407" r="7.3" fill="url(#hp)" stroke="#e8eef8" stroke-width="1"/>
<circle cx="638.5" cy="407.5" r="7.8" fill="none" stroke="#707888" stroke-width="0.6" stroke-opacity="0.6"/>
<path d="M635.5 404.5 C635.5 401.5 641 401.5 641 404.5 C641 406.5 638.2 406.5 638.2 408.8" fill="none" stroke="#fff" stroke-width="1.5"/>
<rect x="637.3" y="410" width="1.8" height="1.8" fill="#fff"/>
</svg>
<svg class="a" style="left:0;top:0" width="657" height="526" shape-rendering="crispEdges"><g fill="#000"><rect x="119" y="36" width="8" height="1"/><rect x="120" y="37" width="6" height="1"/><rect x="121" y="38" width="4" height="1"/><rect x="122" y="39" width="2" height="1"/><rect x="127" y="54" width="2" height="1"/><rect x="126" y="55" width="4" height="1"/><rect x="125" y="56" width="6" height="1"/><rect x="124" y="57" width="8" height="1"/><rect x="124" y="475" width="8" height="1"/><rect x="125" y="476" width="6" height="1"/><rect x="126" y="477" width="4" height="1"/><rect x="127" y="478" width="2" height="1"/><rect x="11" y="491" width="1" height="2"/><rect x="12" y="490" width="1" height="4"/><rect x="13" y="489" width="1" height="6"/><rect x="14" y="488" width="1" height="8"/><rect x="111" y="488" width="1" height="8"/><rect x="112" y="489" width="1" height="6"/><rect x="113" y="490" width="1" height="4"/><rect x="114" y="491" width="1" height="2"/><rect x="614" y="34" width="2" height="1"/><rect x="613" y="35" width="4" height="1"/><rect x="612" y="36" width="6" height="1"/><rect x="611" y="37" width="8" height="1"/><rect x="611" y="474" width="8" height="1"/><rect x="612" y="475" width="6" height="1"/><rect x="613" y="476" width="4" height="1"/><rect x="614" y="477" width="2" height="1"/><rect x="146" y="492" width="1" height="2"/><rect x="147" y="491" width="1" height="4"/><rect x="148" y="490" width="1" height="6"/><rect x="149" y="489" width="1" height="8"/><rect x="613" y="489" width="1" height="8"/><rect x="614" y="490" width="1" height="6"/><rect x="615" y="491" width="1" height="4"/><rect x="616" y="492" width="1" height="2"/></g></svg>
<div class="a" style="left:4px;top:500px;width:650px;height:2px;background:#fafafa;"></div>
<div class="a" style="left:4px;top:502px;width:650px;height:1px;background:#a0a0a6;"></div>
<div class="a" style="left:4px;top:502px;width:1px;height:22px;background:#a0a0a6;"></div>
<div class="a" style="left:5px;top:503px;width:648px;height:1px;background:#66666e;"></div>
<div class="a" style="left:5px;top:503px;width:1px;height:20px;background:#66666e;"></div>
<div class="a" style="left:6px;top:504px;width:647px;height:19px;background:#eeeeee;"></div>
<div class="a" style="left:5px;top:523px;width:649px;height:1px;background:#ffffff;"></div>
<div class="a" style="left:653px;top:503px;width:1px;height:21px;background:#ffffff;"></div>
</body></html>
